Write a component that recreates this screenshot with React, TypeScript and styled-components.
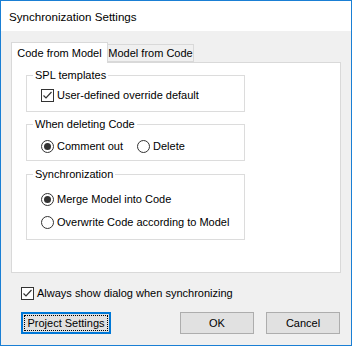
import React from 'react'
import styled, { createGlobalStyle } from 'styled-components'

const GlobalStyle = createGlobalStyle`
  html, body {
    margin: 0;
    padding: 0;
    background: #ffffff;
  }
  body {
    font-family: 'Liberation Sans', Arial, sans-serif;
    font-size: 11px;
    color: #000000;
  }
`

const Window = styled.div`
  box-sizing: border-box;
  width: 352px;
  height: 346px;
  border: 1px solid #1a7fd4;
  display: flex;
  flex-direction: column;
  background: #f0f0f0;
`

const TitleBar = styled.div`
  height: 30px;
  background: #ffffff;
  display: flex;
  align-items: center;
  padding: 1px 0 0 8px;
  box-sizing: border-box;
  font-size: 11.6px;
`

const Body = styled.div`
  flex: 1;
  display: flex;
  flex-direction: column;
  padding: 11px 10px 0 10px;
`

const TabRow = styled.div`
  display: flex;
  align-items: flex-end;
  height: 21px;
  margin-bottom: -1px;
`

const Tab = styled.div<{ $active?: boolean }>`
  box-sizing: border-box;
  position: relative;
  z-index: 1;
  display: flex;
  align-items: center;
  justify-content: center;
  border: 1px solid #d9d9d9;
  border-bottom: ${(p) => (p.$active ? 'none' : '1px solid #d9d9d9')};
  background: ${(p) => (p.$active ? '#ffffff' : '#f0f0f0')};
  height: ${(p) => (p.$active ? '21px' : '18px')};
  margin-bottom: ${(p) => (p.$active ? '0' : '1px')};
  width: ${(p) => (p.$active ? '97px' : '86px')};
  ${(p) => (!p.$active ? 'border-left: none;' : '')}
  white-space: nowrap;
`

const Panel = styled.div`
  box-sizing: border-box;
  height: 211px;
  border: 1px solid #d9d9d9;
  background: #ffffff;
  padding: 5px 0 0 14px;
  display: flex;
  flex-direction: column;
  gap: 5px;
`

const Group = styled.fieldset<{ $gapTop?: number }>`
  box-sizing: border-box;
  width: 219px;
  margin: 0;
  margin-top: ${(p) => p.$gapTop ?? 0}px;
  border: 1px solid #dcdcdc;
  padding: 0 0 0 14px;
  display: flex;
  flex-direction: column;
`

const Legend = styled.legend`
  padding: 0 2px;
  margin-left: -8px;
  line-height: 14px;
  height: 14px;
`

const Row = styled.div<{ $top: number; $bottom?: number }>`
  display: flex;
  align-items: center;
  height: 14px;
  margin-top: ${(p) => p.$top}px;
  margin-bottom: ${(p) => p.$bottom ?? 0}px;
`

const Option = styled.label`
  display: flex;
  align-items: center;
  gap: 3px;
  margin-right: 14px;
  white-space: nowrap;
`

const Box = styled.span`
  box-sizing: border-box;
  width: 13px;
  height: 13px;
  border: 1px solid #333333;
  background: #ffffff;
  display: flex;
  align-items: center;
  justify-content: center;
  flex-shrink: 0;
`

const Radio = styled.span<{ $on?: boolean }>`
  box-sizing: border-box;
  width: 13px;
  height: 13px;
  border-radius: 50%;
  border: 1px solid #333333;
  background: #ffffff;
  display: flex;
  align-items: center;
  justify-content: center;
  flex-shrink: 0;
  &::after {
    content: '';
    width: 7px;
    height: 7px;
    border-radius: 50%;
    background: ${(p) => (p.$on ? '#333333' : 'transparent')};
  }
`

const Footer = styled.div`
  display: flex;
  flex-direction: column;
  padding-left: 10px;
`

const AlwaysRow = styled.div`
  display: flex;
  align-items: center;
  gap: 3px;
  height: 14px;
  margin-top: 13px;
`

const ButtonRow = styled.div`
  display: flex;
  align-items: center;
  margin-top: 12px;
  margin-right: 1px;
`

const Button = styled.button<{ $focus?: boolean; $w: number; $gap?: number }>`
  box-sizing: border-box;
  width: ${(p) => p.$w}px;
  height: 22px;
  background: #e1e1e1;
  border: 1px solid ${(p) => (p.$focus ? '#0078d7' : '#adadad')};
  box-shadow: ${(p) => (p.$focus ? 'inset 0 0 0 1px #0078d7' : 'none')};
  padding: 2px;
  font-family: 'Liberation Sans', Arial, sans-serif;
  font-size: 11px;
  color: #000000;
  display: flex;
  align-items: stretch;
  margin: 0 0 0 ${(p) => p.$gap ?? 0}px;
  white-space: nowrap;
`

const ButtonFace = styled.span<{ $focus?: boolean }>`
  flex: 1;
  display: flex;
  align-items: center;
  justify-content: center;
  border: 1px dotted ${(p) => (p.$focus ? '#000000' : 'transparent')};
`

const Spacer = styled.div`
  flex: 1;
`

const Check = () => (
  <svg width="11" height="11" viewBox="0 0 11 11">
    <polyline
      points="1.5,5.5 4,8 9.5,2"
      fill="none"
      stroke="#333333"
      strokeWidth="1.2"
    />
  </svg>
)

export default function App() {
  return (
    <>
      <GlobalStyle />
      <Window>
        <TitleBar>Synchronization Settings</TitleBar>
        <Body>
          <TabRow>
            <Tab $active>Code from Model</Tab>
            <Tab>Model from Code</Tab>
          </TabRow>
          <Panel>
            <Group>
              <Legend>SPL templates</Legend>
              <Row $top={6} $bottom={9}>
                <Option>
                  <Box>
                    <Check />
                  </Box>
                  User-defined override default
                </Option>
              </Row>
            </Group>
            <Group>
              <Legend>When deleting Code</Legend>
              <Row $top={8} $bottom={7}>
                <Option>
                  <Radio $on />
                  Comment out
                </Option>
                <Option>
                  <Radio />
                  Delete
                </Option>
              </Row>
            </Group>
            <Group $gapTop={1}>
              <Legend>Synchronization</Legend>
              <Row $top={11}>
                <Option>
                  <Radio $on />
                  Merge Model into Code
                </Option>
              </Row>
              <Row $top={9} $bottom={10}>
                <Option>
                  <Radio />
                  Overwrite Code according to Model
                </Option>
              </Row>
            </Group>
          </Panel>
          <Footer>
            <AlwaysRow>
              <Box>
                <Check />
              </Box>
              Always show dialog when synchronizing
            </AlwaysRow>
            <ButtonRow>
              <Button $focus $w={90}>
                <ButtonFace $focus>Project Settings</ButtonFace>
              </Button>
              <Spacer />
              <Button $w={74}>
                <ButtonFace>OK</ButtonFace>
              </Button>
              <Button $w={74} $gap={12}>
                <ButtonFace>Cancel</ButtonFace>
              </Button>
            </ButtonRow>
          </Footer>
        </Body>
      </Window>
    </>
  )
}
